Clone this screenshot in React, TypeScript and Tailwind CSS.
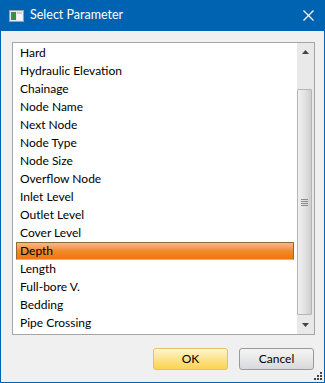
const params = [
  "Hard",
  "Hydraulic Elevation",
  "Chainage",
  "Node Name",
  "Next Node",
  "Node Type",
  "Node Size",
  "Overflow Node",
  "Inlet Level",
  "Outlet Level",
  "Cover Level",
  "Depth",
  "Length",
  "Full-bore V.",
  "Bedding",
  "Pipe Crossing",
];

const selected = "Depth";

function AppIcon() {
  return (
    <svg width="15" height="12" viewBox="0 0 15 12">
      <rect x="0.5" y="0.5" width="14" height="11" fill="#e9ecef" stroke="#9aa3ab" />
      <rect x="2" y="2" width="5" height="8" fill="#3e8a52" />
      <rect x="8" y="2" width="5" height="8" fill="#f4f6f7" />
      <rect x="8" y="2" width="5" height="2" fill="#c6d2da" />
    </svg>
  );
}

function ScrollBar() {
  return (
    <div className="flex w-[17px] flex-col bg-[#e9e9e9]">
      <div className="flex h-[17px] items-center justify-center">
        <svg width="7" height="4" viewBox="0 0 7 4">
          <polygon points="0,4 7,4 3.5,0" fill="#444" />
        </svg>
      </div>
      <div className="h-[29px]" />
      <div className="flex h-[226px] w-[15px] flex-col items-center justify-center rounded-[1px] border border-[#b5b5b5] bg-gradient-to-r from-[#f0f0f0] via-[#e3e3e3] to-[#cfcfcf]">
        <div className="flex flex-col gap-[1px]">
          <div className="h-[1px] w-[7px] bg-[#8a8a8a]" />
          <div className="h-[1px] w-[7px] bg-[#8a8a8a]" />
          <div className="h-[1px] w-[7px] bg-[#8a8a8a]" />
          <div className="h-[1px] w-[7px] bg-[#8a8a8a]" />
        </div>
      </div>
      <div className="flex flex-1 items-center justify-center">
        <svg width="7" height="4" viewBox="0 0 7 4">
          <polygon points="0,0 7,0 3.5,4" fill="#444" />
        </svg>
      </div>
    </div>
  );
}

export default function App() {
  return (
    <div
      className="flex h-[383px] w-[325px] flex-col bg-[#0063b1] text-[12px] text-black"
      style={{ fontFamily: "Lato, 'Noto Sans', sans-serif" }}
    >
      <div className="flex h-[31px] items-center pl-[9px] pr-[11px] text-[12.5px] text-white">
        <AppIcon />
        <span className="ml-[6px] flex-1">Select Parameter</span>
        <svg width="11" height="11" viewBox="0 0 11 11">
          <path d="M0.5 0.5 L10.5 10.5 M10.5 0.5 L0.5 10.5" stroke="#fff" strokeWidth="1.2" />
        </svg>
      </div>

      <div className="relative mx-[1px] mb-[1px] flex flex-1 flex-col bg-[#f0f0f0] pl-[11px] pr-[9px] pt-[11px]">
        <div className="flex h-[293px] border border-[#a5a5a5] bg-white">
          <ul className="flex-1 px-[3px] pt-[1px]">
            {params.map((p) =>
              p === selected ? (
                <li
                  key={p}
                  className="flex h-[18px] items-center rounded-[1px] border border-[#8e6b36] border-b-[#f5c400] bg-gradient-to-b from-[#f8b887] via-[#f28a2a] to-[#ee7608] px-[3px]"
                >
                  {p}
                </li>
              ) : (
                <li key={p} className="flex h-[18px] items-center px-[4px]">
                  {p}
                </li>
              ),
            )}
          </ul>
          <ScrollBar />
        </div>

        <div className="mt-[13px] flex justify-end gap-[11px] pr-[1px]">
          <button className="h-[22px] w-[75px] rounded-[3px] border border-[#e3c164] bg-gradient-to-b from-[#fff6d2] via-[#fde38a] to-[#fcd44e]">
            OK
          </button>
          <button className="h-[22px] w-[75px] rounded-[3px] border border-[#9a9a9a] bg-gradient-to-b from-[#f4f4f4] via-[#e8e8e8] to-[#d6d9dd]">
            Cancel
          </button>
        </div>

        <svg className="absolute bottom-[2px] right-[2px]" width="8" height="8" viewBox="0 0 8 8">
          <rect x="6" y="0" width="2" height="2" fill="#444" />
          <rect x="3" y="3" width="2" height="2" fill="#444" />
          <rect x="6" y="3" width="2" height="2" fill="#444" />
          <rect x="0" y="6" width="2" height="2" fill="#444" />
          <rect x="3" y="6" width="2" height="2" fill="#444" />
          <rect x="6" y="6" width="2" height="2" fill="#444" />
        </svg>
      </div>
    </div>
  );
}
